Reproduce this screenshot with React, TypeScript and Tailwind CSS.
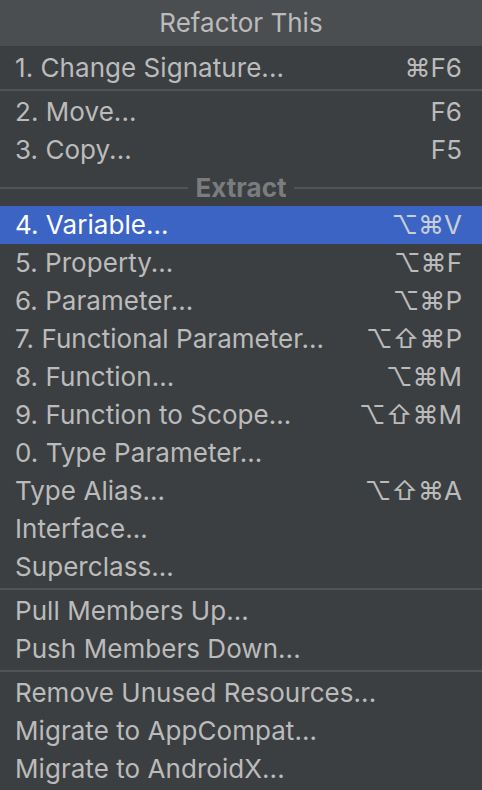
const groups: { label?: string; items: { name: string; keys?: string; active?: boolean }[] }[] = [
  { items: [{ name: "1. Change Signature...", keys: "⌘F6" }] },
  {
    items: [
      { name: "2. Move...", keys: "F6" },
      { name: "3. Copy...", keys: "F5" },
    ],
  },
  {
    label: "Extract",
    items: [
      { name: "4. Variable...", keys: "⌥⌘V", active: true },
      { name: "5. Property...", keys: "⌥⌘F" },
      { name: "6. Parameter...", keys: "⌥⌘P" },
      { name: "7. Functional Parameter...", keys: "⌥⇧⌘P" },
      { name: "8. Function...", keys: "⌥⌘M" },
      { name: "9. Function to Scope...", keys: "⌥⇧⌘M" },
      { name: "0. Type Parameter..." },
      { name: "Type Alias...", keys: "⌥⇧⌘A" },
      { name: "Interface..." },
      { name: "Superclass..." },
    ],
  },
  {
    items: [{ name: "Pull Members Up..." }, { name: "Push Members Down..." }],
  },
  {
    items: [
      { name: "Remove Unused Resources..." },
      { name: "Migrate to AppCompat..." },
      { name: "Migrate to AndroidX..." },
    ],
  },
]

const Row = ({ name, keys, active }: { name: string; keys?: string; active?: boolean }) => (
  <div
    className={`flex h-[38px] items-center justify-between pl-[15px] pr-[20px] ${
      active ? "bg-[#3b64c5] text-white" : "text-[#bbbbbb]"
    }`}
  >
    <span className="tracking-[0.05px]">{name}</span>
    {keys && <span className={active ? "text-[#c9cdd6]" : ""}>{keys}</span>}
  </div>
)

export default function App() {
  return (
    <div
      className="w-[482px] h-[790px] overflow-hidden bg-[#3c3f41] text-[26px] leading-none"
      style={{ fontFamily: "Inter, 'Noto Sans', 'DejaVu Sans', sans-serif" }}
    >
      <div className="flex h-[46px] items-center justify-center bg-[#4b4e51] text-[#bbbbbb]">Refactor This</div>
      <div className="pt-[3px]">
        {groups.map((g, i) => (
          <div key={i}>
            {i > 0 &&
              (g.label ? (
                <div className="flex h-[37px] items-center gap-[8px]">
                  <div className="h-[2px] flex-1 bg-[#515457]" />
                  <span className="font-bold text-[#7a7c7e]">{g.label}</span>
                  <div className="h-[2px] flex-1 bg-[#515457]" />
                </div>
              ) : (
                <div className="flex h-[6px] items-center">
                  <div className="h-[2px] w-full bg-[#515457]" />
                </div>
              ))}
            {g.items.map((it) => (
              <Row key={it.name} {...it} />
            ))}
          </div>
        ))}
      </div>
    </div>
  )
}
